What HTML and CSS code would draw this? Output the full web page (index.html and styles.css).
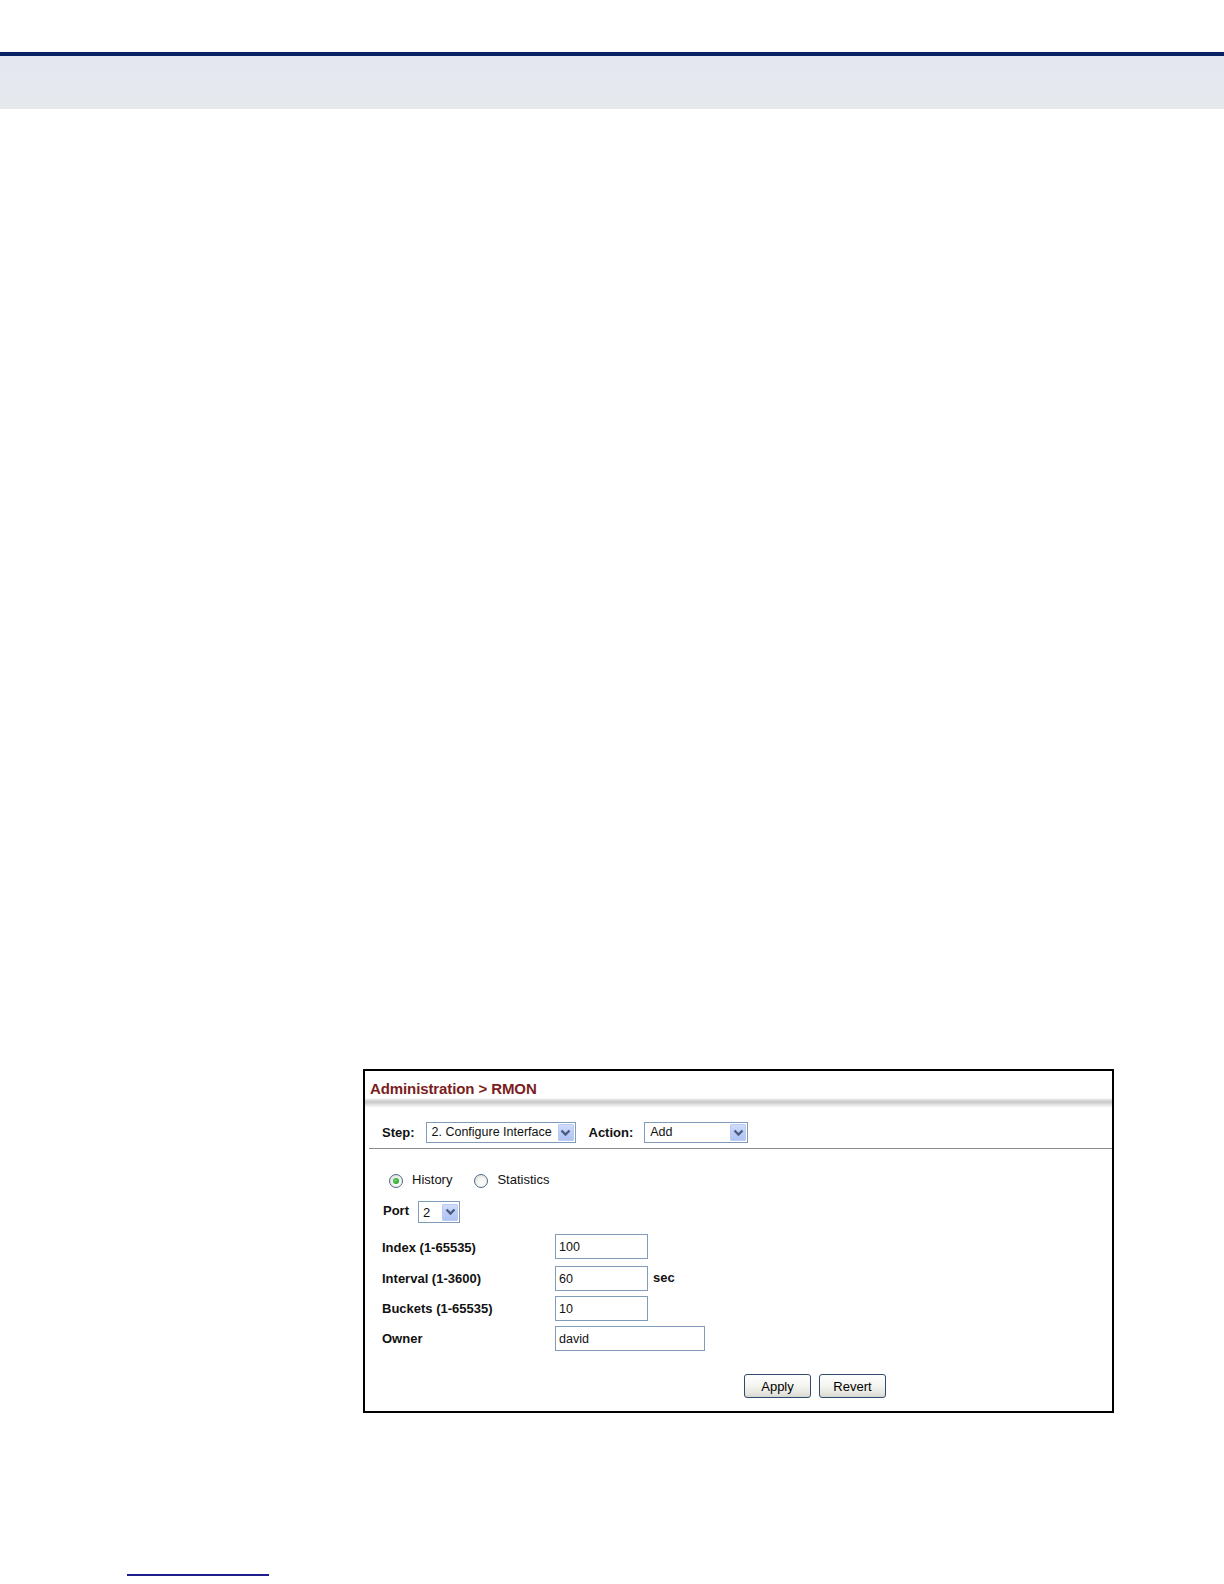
FILE: index.html
```html
<!DOCTYPE html>
<html lang="en">
<head>
<meta charset="utf-8">
<title>Administration &gt; RMON</title>
<link rel="stylesheet" href="styles.css">
</head>
<body>
<div class="topbar"></div>

<div class="panel">
  <div class="panel-title">Administration &gt; RMON</div>
  <div class="title-shadow"></div>

  <div class="step-row">
    <span class="label">Step:</span>
    <div class="select select-step">
      <span class="select-value">2. Configure Interface</span>
      <span class="select-arrow"><svg width="11" height="8" viewBox="0 0 11 8"><path d="M1.5 1.5 L5.5 5.5 L9.5 1.5" fill="none" stroke="#4a5d80" stroke-width="2.4"/></svg></span>
    </div>
    <span class="label label-action">Action:</span>
    <div class="select select-action">
      <span class="select-value">Add</span>
      <span class="select-arrow"><svg width="11" height="8" viewBox="0 0 11 8"><path d="M1.5 1.5 L5.5 5.5 L9.5 1.5" fill="none" stroke="#4a5d80" stroke-width="2.4"/></svg></span>
    </div>
  </div>

  <div class="radio-row">
    <span class="radio checked"><span class="dot"></span></span>
    <span class="radio-text">History</span>
    <span class="radio radio-second"></span>
    <span class="radio-text">Statistics</span>
  </div>

  <div class="port-row">
    <span class="label">Port</span>
    <div class="select select-port">
      <span class="select-value">2</span>
      <span class="select-arrow"><svg width="11" height="8" viewBox="0 0 11 8"><path d="M1.5 1.5 L5.5 5.5 L9.5 1.5" fill="none" stroke="#4a5d80" stroke-width="2.4"/></svg></span>
    </div>
  </div>

  <div class="field-row row-index">
    <span class="field-label">Index (1-65535)</span>
    <input class="field-input" type="text" value="100">
  </div>
  <div class="field-row row-interval">
    <span class="field-label">Interval (1-3600)</span>
    <input class="field-input" type="text" value="60">
    <span class="unit">sec</span>
  </div>
  <div class="field-row row-buckets">
    <span class="field-label">Buckets (1-65535)</span>
    <input class="field-input" type="text" value="10">
  </div>
  <div class="field-row row-owner">
    <span class="field-label">Owner</span>
    <input class="field-input field-wide" type="text" value="david">
  </div>

  <div class="button-row">
    <button class="btn" type="button">Apply</button>
    <button class="btn" type="button">Revert</button>
  </div>
</div>

<div class="footline"></div>
</body>
</html>
```

FILE: styles.css
```css
html, body {
  margin: 0;
  padding: 0;
  background: #ffffff;
}

body {
  font-family: "Liberation Sans", Arial, sans-serif;
  font-size: 13px;
  color: #111111;
  width: 1224px;
  height: 1584px;
  overflow: hidden;
}

.topbar {
  margin-top: 52px;
  height: 53px;
  border-top: 4px solid #0b2262;
  background: linear-gradient(to bottom, #e4e7f0 0%, #e5e8ef 60%, #e6e9eb 100%);
}

.panel {
  box-sizing: border-box;
  margin-top: 960px;
  margin-left: 363px;
  width: 751px;
  height: 344px;
  border: 2px solid #000000;
  background: #ffffff;
}

.panel-title {
  padding: 9px 0 0 5px;
  font-size: 15px;
  line-height: 18px;
  font-weight: bold;
  color: #7a1d1d;
  letter-spacing: -0.1px;
}

.title-shadow {
  height: 10px;
  background: linear-gradient(to bottom, #ffffff 0%, #d6d6d6 25%, #cbcbcb 45%, #e6e6e6 70%, #ffffff 100%);
}

.label {
  font-weight: bold;
  line-height: 15px;
}

.step-row {
  display: flex;
  align-items: center;
  padding: 14px 0 5px 13px;
  margin-left: 4px;
  border-bottom: 1px solid #8c8c8c;
}

.select {
  box-sizing: border-box;
  display: flex;
  align-items: center;
  height: 21px;
  border: 1px solid #7f9db9;
  background: #ffffff;
  padding: 1px;
}

.select-value {
  flex: 1;
  padding-left: 4px;
  font-size: 12.5px;
  line-height: 15px;
  white-space: nowrap;
  overflow: hidden;
}

.select-arrow {
  box-sizing: border-box;
  display: flex;
  align-items: center;
  justify-content: center;
  flex: none;
  width: 16px;
  height: 17px;
  border: 1px solid #b9cbf3;
  border-radius: 1px;
  background: linear-gradient(to bottom, #d2ddfb 0%, #bccdf7 50%, #b0c3f2 100%);
}

.select-step {
  margin-left: 11px;
  width: 150px;
}

.label-action {
  margin-left: 13px;
}

.select-action {
  margin-left: 11px;
  width: 104px;
}

.radio-row {
  display: flex;
  align-items: center;
  padding: 21px 0 0 24px;
  line-height: 15px;
}

.radio {
  box-sizing: border-box;
  display: flex;
  align-items: center;
  justify-content: center;
  width: 14px;
  height: 14px;
  margin-top: 4px;
  border: 1px solid #4d6a8a;
  border-radius: 50%;
  background: radial-gradient(circle at 60% 65%, #ffffff 0%, #f2f2ee 45%, #d6d6d0 100%);
}

.radio .dot {
  width: 6px;
  height: 6px;
  border-radius: 50%;
  background: radial-gradient(circle at 40% 40%, #6fd26f 0%, #2aa62a 70%);
}

.radio-text {
  margin-left: 9px;
}

.radio-second {
  margin-left: 22px;
}

.port-row {
  display: flex;
  align-items: flex-start;
  padding: 13px 0 0 18px;
}

.port-row .label {
  padding-top: 2px;
}

.select-port {
  margin-left: 9px;
  width: 42px;
  height: 22px;
}

.select-port .select-value {
  padding-left: 3px;
  font-size: 13px;
}

.field-row {
  display: flex;
  align-items: flex-start;
  padding-left: 17px;
}

.row-index { margin-top: 11px; }
.row-interval { margin-top: 7px; }
.row-buckets { margin-top: 5px; }
.row-owner { margin-top: 5px; }

.field-label {
  width: 173px;
  padding-top: 5px;
  font-weight: bold;
  line-height: 15px;
}

.row-index .field-label { padding-top: 6px; }

.field-input {
  box-sizing: border-box;
  width: 93px;
  height: 25px;
  margin: 0;
  padding: 0 3px;
  border: 1px solid #7f9db9;
  font-family: "Liberation Sans", Arial, sans-serif;
  font-size: 12.5px;
  color: #111111;
  background: #ffffff;
  outline: none;
}

.field-wide {
  width: 150px;
}

.unit {
  margin-left: 5px;
  padding-top: 4px;
  font-weight: bold;
  line-height: 15px;
}

.button-row {
  display: flex;
  gap: 8px;
  padding: 23px 0 0 379px;
}

.btn {
  box-sizing: border-box;
  width: 67px;
  height: 24px;
  margin: 0;
  padding: 0;
  border: 1px solid #2f4c70;
  border-radius: 3px;
  background: linear-gradient(to bottom, #ffffff 0%, #f5f5f1 45%, #e8e8e2 80%, #d6d6cf 100%);
  font-family: "Liberation Sans", Arial, sans-serif;
  font-size: 13px;
  color: #000000;
  line-height: 15px;
}

.footline {
  margin-top: 161px;
  margin-left: 127px;
  width: 142px;
  height: 2px;
  background: #1e1e8c;
}
```
